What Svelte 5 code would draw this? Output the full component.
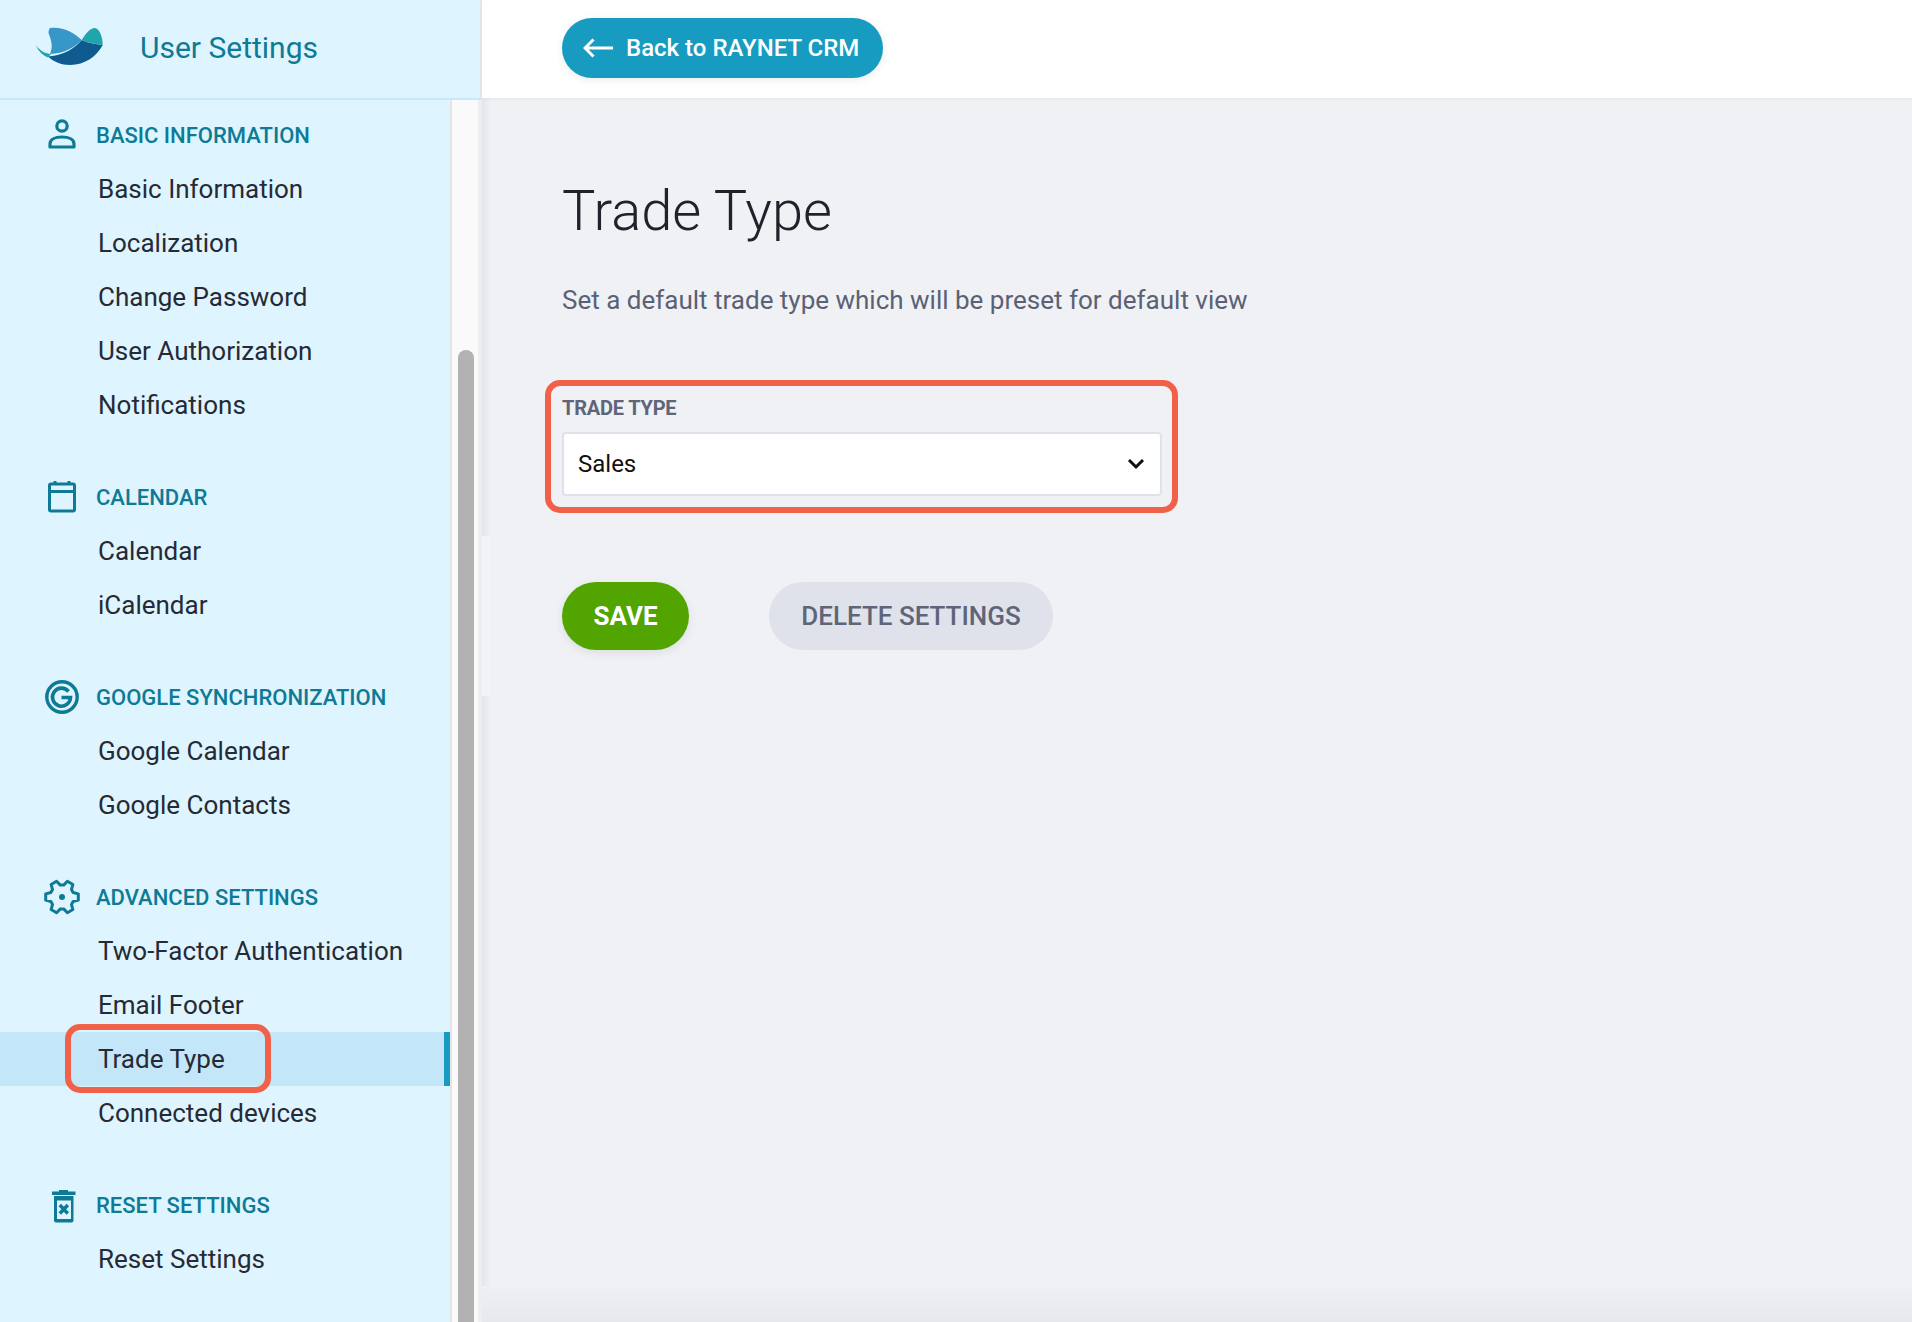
<script>
  const groups = [
    { title: 'BASIC INFORMATION', icon: 'person', items: ['Basic Information', 'Localization', 'Change Password', 'User Authorization', 'Notifications'] },
    { title: 'CALENDAR', icon: 'calendar', items: ['Calendar', 'iCalendar'] },
    { title: 'GOOGLE SYNCHRONIZATION', icon: 'google', items: ['Google Calendar', 'Google Contacts'] },
    { title: 'ADVANCED SETTINGS', icon: 'gear', items: ['Two-Factor Authentication', 'Email Footer', 'Trade Type', 'Connected devices'] },
    { title: 'RESET SETTINGS', icon: 'trash', items: ['Reset Settings'] }
  ];

  const gearPoints = [];
  for (let k = 0; k < 6; k++) {
    const a = k * 60;
    for (const [r, d] of [[12, -22], [16.6, -11], [16.6, 11], [12, 22]]) {
      const t = ((a + d) * Math.PI) / 180;
      gearPoints.push(`${(18 + r * Math.cos(t)).toFixed(2)},${(18 + r * Math.sin(t)).toFixed(2)}`);
    }
  }
  const gear = gearPoints.join(' ');
</script>

<div class="page">
  <aside class="side">
    <div class="brand">
      <svg class="logo" viewBox="0 0 100 70" width="100" height="70">
        <path fill="#20a5ab" d="M16 35C20 42 28 44 31 44L28 47.500C22 45 17.500 40 16 35Z" />
        <path fill="#0f5b90" d="M28 46.500C45 45 55 38 61.700 30C68 33 75 34 82.700 35C77 46 65 55 50 55C41 55 34 52 28 46.500Z" />
        <path fill="#3797c9" d="M30 18C43 16.500 53 22 61.700 30C54 38 44 43.500 30 44C33.500 36 31 30 28.500 23C28.500 21 29 19 30 18Z" />
        <path fill="#20a5ab" d="M61.700 30C66 23 70 18 75 18C80.500 19.500 82.500 28 82.700 35C75 34 68 33 61.700 30Z" />
      </svg>
      <span class="brand-name">User Settings</span>
    </div>
    <div class="side-body">
      <nav class="nav">
        {#each groups as g}
          <section class="group">
            <h3 class="group-head">
              <span class="icon">
                {#if g.icon === 'person'}
                  <svg viewBox="0 0 36 36" width="36" height="36"><circle cx="18" cy="9" r="5.200" fill="none" stroke="currentColor" stroke-width="3.200" /><path fill="none" stroke="currentColor" stroke-width="3.200" stroke-linejoin="round" d="M6 30V27C6 22.500 11 20 18 20S30 22.500 30 27V30Z" /></svg>
                {:else if g.icon === 'calendar'}
                  <svg viewBox="0 0 36 36" width="36" height="36"><rect x="5.500" y="5" width="25" height="27" rx="1.500" fill="none" stroke="currentColor" stroke-width="3" /><path stroke="currentColor" stroke-width="3" d="M5.500 12.500H30.500M11 2V6M25 2V6" fill="none" /></svg>
                {:else if g.icon === 'google'}
                  <svg viewBox="0 0 36 36" width="36" height="36"><circle cx="18" cy="18" r="15.200" fill="none" stroke="currentColor" stroke-width="3.400" /><path fill="none" stroke="currentColor" stroke-width="3.600" d="M24.500 12.500A9 9 0 1 0 26.500 18.500H17.500" /></svg>
                {:else if g.icon === 'gear'}
                  <svg viewBox="0 0 36 36" width="36" height="36"><polygon points={gear} fill="none" stroke="currentColor" stroke-width="3" stroke-linejoin="round" /><circle cx="18" cy="18" r="3" fill="currentColor" /></svg>
                {:else}
                  <svg viewBox="0 0 36 36" width="36" height="36"><path fill="currentColor" d="M8 4.500H15V3H24V4.500H31.500V8H8ZM10 9H29.500V33.500C29.500 34.500 28.500 35.500 27.500 35.500H12C11 35.500 10 34.500 10 33.500ZM13 13.500V32H27V13.500Z" /><path stroke="currentColor" stroke-width="3.400" d="M15.800 18L23.800 26.500M23.800 18L15.800 26.500" fill="none" /></svg>
                {/if}
              </span>
              {g.title}
            </h3>
            <ul class="items">
              {#each g.items as item}
                <li class="item" class:active={item === 'Trade Type'}>
                  {item}
                  {#if item === 'Trade Type'}<span class="mark"></span>{/if}
                </li>
              {/each}
            </ul>
          </section>
        {/each}
      </nav>
      <div class="track"><div class="thumb"></div></div>
    </div>
  </aside>

  <div class="main">
    <header class="top">
      <button class="back">
        <svg viewBox="0 0 30 20" width="30" height="20"><path fill="none" stroke="#fff" stroke-width="3" d="M30 10H2M10.500 1.500L2 10L10.500 18.500" /></svg>
        Back to RAYNET CRM
      </button>
    </header>
    <main class="content">
      <span class="patch"></span>
      <h1 class="title">Trade Type</h1>
      <p class="lead">Set a default trade type which will be preset for default view</p>
      <div class="field">
        <div class="label">TRADE TYPE</div>
        <div class="select">
          <span>Sales</span>
          <svg viewBox="0 0 18 12" width="18" height="12"><path fill="none" stroke="#111" stroke-width="3" d="M2 2L9 9L16 2" /></svg>
        </div>
      </div>
      <div class="actions">
        <button class="btn save">SAVE</button>
        <button class="btn del">DELETE SETTINGS</button>
      </div>
    </main>
  </div>
</div>

<style>
  :global(body) {
    margin: 0;
    font-family: Roboto, "Liberation Sans", sans-serif;
    background: #eff1f5;
  }
  .page {
    display: grid;
    grid-template-columns: 482px 1fr;
    height: 1322px;
    width: 1912px;
    overflow: hidden;
  }
  .side {
    display: flex;
    flex-direction: column;
    min-height: 0;
    overflow: hidden;
  }
  .brand {
    height: 98px;
    flex: none;
    display: flex;
    align-items: center;
    position: relative;
    background: #def4ff;
    border-bottom: 2px solid #c5e8fa;
    border-right: 2px solid #e3e8ec;
  }
  .logo {
    position: absolute;
    left: 20px;
    top: 10px;
  }
  .brand-name {
    margin-left: 140px;
    font-size: 30px;
    color: #0e7a96;
    position: relative;
    top: -2px;
  }
  .side-body {
    flex: 1;
    display: flex;
    min-height: 0;
  }
  .nav {
    width: 450px;
    flex: none;
    background: #def4ff;
    padding-top: 8px;
    overflow: hidden;
  }
  .group {
    margin-bottom: 38px;
  }
  .group-head {
    display: flex;
    align-items: center;
    height: 54px;
    margin: 0;
    padding-left: 44px;
    font-size: 22px;
    font-weight: 500;
    color: #0e7a96;
  }
  .icon {
    width: 36px;
    height: 36px;
    margin-right: 16px;
    display: flex;
  }
  .items {
    list-style: none;
    margin: 0;
    padding: 0;
  }
  .item {
    height: 54px;
    line-height: 54px;
    padding-left: 98px;
    font-size: 26px;
    color: #262a35;
    position: relative;
  }
  .item.active {
    background: #c3e6f9;
    box-shadow: inset -6px 0 0 #179bc0;
  }
  .mark {
    position: absolute;
    left: 65px;
    top: -8px;
    width: 206px;
    height: 69px;
    box-sizing: border-box;
    border: 6px solid #f1614a;
    border-radius: 15px;
  }
  .track {
    flex: 1;
    background: #fafafa;
    border-left: 2px solid #e2e4e6;
    border-right: 4px solid #eceef1;
    padding: 250px 4px 0 6px;
  }
  .thumb {
    height: 1100px;
    background: #b2b2b2;
    border-radius: 8px 8px 0 0;
  }
  .main {
    display: flex;
    flex-direction: column;
    min-width: 0;
  }
  .top {
    height: 98px;
    flex: none;
    background: #fff;
    box-shadow: 0 1px 3px rgba(0, 0, 0, 0.05);
    padding: 18px 0 0 80px;
    box-sizing: border-box;
    position: relative;
    z-index: 1;
  }
  .back {
    display: flex;
    align-items: center;
    gap: 13px;
    height: 60px;
    width: 321px;
    padding: 0 0 0 21px;
    border: 0;
    border-radius: 30px;
    background: #179bc0;
    color: #fff;
    font: 500 24px Roboto, sans-serif;
    box-shadow: 0 2px 8px rgba(0, 0, 0, 0.08);
  }
  .content {
    flex: 1;
    position: relative;
    padding: 0 0 0 80px;
    background:
      linear-gradient(180deg, transparent calc(100% - 36px), #eef0f3 calc(100% - 36px), #e6e8eb 100%),
      linear-gradient(90deg, #e3e5ea 0, #eff1f5 9px);
  }
  .patch {
    position: absolute;
    left: 0;
    top: 438px;
    width: 8px;
    height: 160px;
    background: #f1f3f6;
  }
  .title {
    margin: 74px 0 0;
    font-size: 56px;
    line-height: 78px;
    font-weight: 300;
    color: #1f222b;
  }
  .lead {
    margin: 32px 0 0;
    font-size: 26px;
    line-height: 36px;
    color: #5a6175;
  }
  .field {
    margin: 62px 0 0 -17px;
    width: 633px;
    height: 133px;
    box-sizing: border-box;
    border: 6px solid #f1614a;
    border-radius: 15px;
    padding: 7px 0 0 11px;
  }
  .label {
    font-size: 20px;
    line-height: 30px;
    font-weight: 700;
    letter-spacing: -0.2px;
    color: #5e6579;
    margin-bottom: 9px;
  }
  .select {
    width: 600px;
    height: 64px;
    box-sizing: border-box;
    background: #fff;
    border: 2px solid #dfe2ea;
    border-radius: 4px;
    display: flex;
    align-items: center;
    justify-content: space-between;
    padding: 0 15px 0 14px;
    font-size: 24px;
    color: #111;
  }
  .actions {
    display: flex;
    gap: 80px;
    margin-top: 69px;
  }
  .btn {
    height: 68px;
    border: 0;
    border-radius: 34px;
    font: 500 26px Roboto, sans-serif;
  }
  .save {
    width: 127px;
    background: #52a500;
    color: #fff;
    font-weight: 700;
    box-shadow: 0 3px 10px rgba(0, 0, 0, 0.08);
  }
  .del {
    width: 284px;
    background: #dfe2ea;
    color: #5e6579;
  }
</style>
